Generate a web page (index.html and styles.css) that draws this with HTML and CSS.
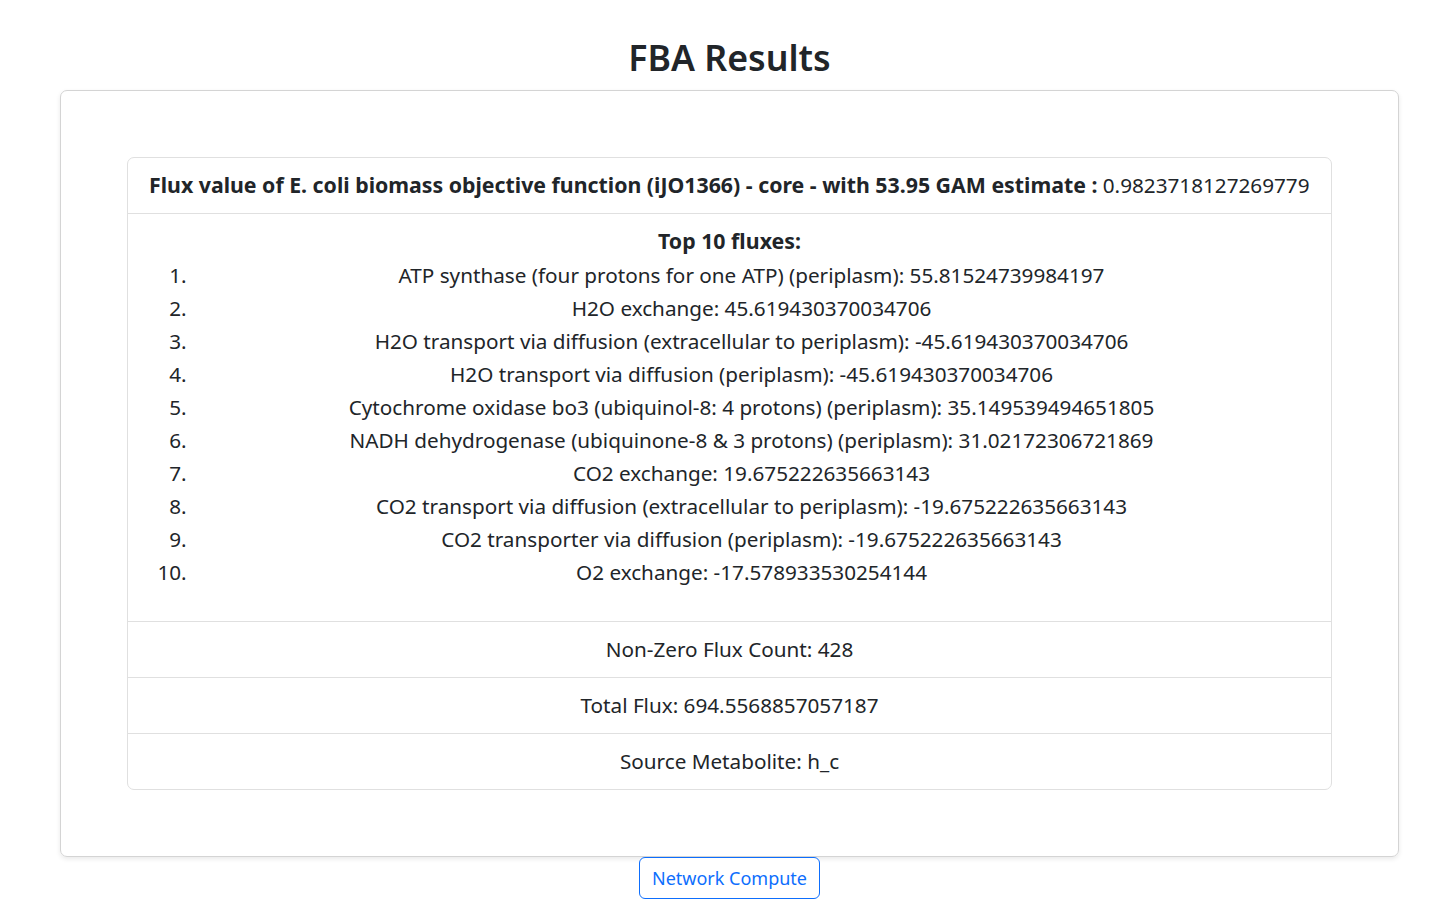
FILE: index.html
```html
<!DOCTYPE html>
<html lang="en">
<head>
<meta charset="utf-8">
<title>FBA Results</title>
<link rel="stylesheet" href="styles.css">
</head>
<body>
<div class="page">
  <h1 class="title">FBA Results</h1>
  <div class="outer-card">
    <div class="result-card">
      <div class="result-header"><strong class="hdr-label">Flux value of E. coli biomass objective function (iJO1366) - core - with 53.95 GAM estimate :</strong> 0.9823718127269779</div>
      <div class="result-body">
        <div class="top-title">Top 10 fluxes:</div>
        <ol class="flux-list">
          <li>ATP synthase (four protons for one ATP) (periplasm): 55.81524739984197</li>
          <li>H2O exchange: 45.619430370034706</li>
          <li>H2O transport via diffusion (extracellular to periplasm): -45.619430370034706</li>
          <li>H2O transport via diffusion (periplasm): -45.619430370034706</li>
          <li>Cytochrome oxidase bo3 (ubiquinol-8: 4 protons) (periplasm): 35.149539494651805</li>
          <li>NADH dehydrogenase (ubiquinone-8 &amp; 3 protons) (periplasm): 31.02172306721869</li>
          <li>CO2 exchange: 19.675222635663143</li>
          <li>CO2 transport via diffusion (extracellular to periplasm): -19.675222635663143</li>
          <li>CO2 transporter via diffusion (periplasm): -19.675222635663143</li>
          <li>O2 exchange: -17.578933530254144</li>
        </ol>
      </div>
      <div class="result-row">Non-Zero Flux Count: 428</div>
      <div class="result-row">Total Flux: 694.5568857057187</div>
      <div class="result-row">Source Metabolite: h_c</div>
    </div>
  </div>
  <div class="actions">
    <button class="btn-outline" type="button">Network Compute</button>
  </div>
</div>
</body>
</html>
```
FILE: styles.css
```css
html, body {
  margin: 0;
  padding: 0;
  background: #fff;
}
body {
  font-family: "Noto Sans", "Open Sans", sans-serif;
  color: #212529;
  font-size: 20.7px;
}
.page {
  margin: 0 51px 0 60px;
}
.title {
  margin: 33px 0 9px;
  font-size: 35.7px;
  line-height: 48px;
  font-weight: 600;
  text-align: center;
}
.outer-card {
  border: 1px solid #d4d4d4;
  border-radius: 7px;
  box-shadow: 0 2px 5px rgba(0, 0, 0, 0.09);
  padding: 66px;
}
.result-card {
  border: 1px solid #e0e0e0;
  border-radius: 7px;
  overflow: hidden;
}
.result-header {
  padding: 12px 21px 13px;
  line-height: 30px;
  border-bottom: 1px solid #e0e0e0;
  white-space: nowrap;
}
.hdr-label {
  font-size: 21.3px;
  font-weight: 700;
}
.result-body {
  padding: 12px 20px;
}
.top-title {
  text-align: center;
  font-weight: 700;
  font-size: 21.3px;
  line-height: 30px;
}
.flux-list {
  margin: 3px 0 20px;
  padding-left: 44px;
}
.flux-list li {
  text-align: center;
  line-height: 33px;
}
.result-row {
  border-top: 1px solid #e0e0e0;
  padding: 12px 20px 13px;
  line-height: 30px;
  text-align: center;
}
.actions {
  display: flex;
  justify-content: center;
}
.btn-outline {
  font-family: "Noto Sans", "Open Sans", sans-serif;
  font-size: 18px;
  line-height: 28px;
  padding: 6px 12px;
  color: #0d6efd;
  background: #fff;
  border: 1px solid #0d6efd;
  border-radius: 6px;
  cursor: pointer;
}
```
